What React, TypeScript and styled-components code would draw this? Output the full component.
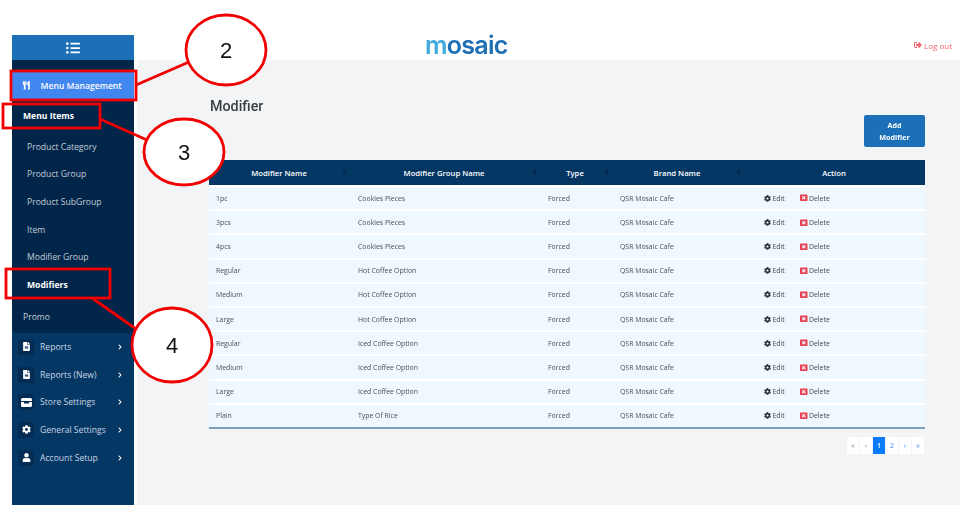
import React from 'react';
import styled, { createGlobalStyle } from 'styled-components';
import {
  FaChevronRight,
  FaCog,
  FaFileAlt,
  FaListUl,
  FaSignOutAlt,
  FaSort,
  FaUser,
  FaUtensils,
  FaWindowClose,
} from 'react-icons/fa';

const GlobalStyle = createGlobalStyle`
  html, body {
    margin: 0;
    background: #ffffff;
  }
  body {
    font-family: 'Open Sans', 'Liberation Sans', sans-serif;
  }
`;

const Page = styled.div`
  position: relative;
  width: 968px;
  height: 520px;
  padding: 35px 8px 15px 12px;
  box-sizing: border-box;
  overflow: hidden;
`;

const Shell = styled.div`
  display: flex;
  gap: 3px;
  height: 470px;
  filter: blur(0.5px);
`;

const Sidebar = styled.aside`
  width: 122px;
  flex: none;
  display: flex;
  flex-direction: column;
  background: #053765;
`;

const SidebarTop = styled.div`
  height: 25px;
  flex: none;
  display: flex;
  align-items: center;
  justify-content: center;
  background: #1b70b8;
  color: #ffffff;
  font-size: 14px;
`;

const SubMenu = styled.div`
  display: flex;
  flex-direction: column;
  height: 273px;
  flex: none;
  padding: 12px 0 0;
  box-sizing: border-box;
  background: #02264a;
  border-bottom-left-radius: 5px;
  border-bottom-right-radius: 5px;
`;

const MenuManagement = styled.div`
  display: flex;
  align-items: center;
  gap: 10px;
  height: 27px;
  padding-left: 10px;
  background: #4286f0;
  color: #ffffff;
  font-size: 8.6px;
  font-weight: 600;
  margin-bottom: 3px;
`;

const SubItem = styled.div<{ $active?: boolean; $outer?: boolean; $gap?: number }>`
  display: flex;
  align-items: center;
  flex: none;
  height: 27.7px;
  margin-top: ${(p) => p.$gap ?? 0}px;
  padding-left: ${(p) => (p.$outer ? '11px' : '15px')};
  color: ${(p) => (p.$active ? '#ffffff' : '#c3ccd8')};
  font-size: 8.6px;
  font-weight: ${(p) => (p.$active ? 700 : 400)};
`;

const SectionList = styled.div`
  display: flex;
  flex-direction: column;
`;

const Section = styled.div`
  display: flex;
  align-items: center;
  height: 27.7px;
  padding-left: 6px;
  color: #c9d5e2;
  font-size: 8.6px;
`;

const SectionIcon = styled.span`
  display: flex;
  align-items: center;
  justify-content: center;
  width: 16px;
  height: 16px;
  margin-right: 6px;
  border-radius: 2px;
  background: #032c55;
  color: #ffffff;
  font-size: 9px;
`;

const SectionLabel = styled.span`
  flex: 1;
`;

const Chevron = styled.span`
  display: flex;
  margin-right: 11px;
  color: #ffffff;
  font-size: 6px;
`;

const Main = styled.main`
  flex: 1;
  display: flex;
  flex-direction: column;
  min-width: 0;
`;

const Header = styled.header`
  height: 25px;
  flex: none;
  display: flex;
  align-items: center;
  justify-content: space-between;
  padding: 0 8px 0 288px;
  background: #ffffff;
`;

const Logo = styled.div`
  margin-top: -5px;
  font-family: 'Inter', sans-serif;
  font-size: 25px;
  font-weight: 600;
  line-height: 22px;
  letter-spacing: -0.7px;
  color: #1c6fb4;
  span {
    color: #3eaadf;
  }
`;

const LogOut = styled.div`
  display: flex;
  align-items: center;
  gap: 2px;
  margin-top: -5px;
  color: #f0646a;
  font-size: 8px;
`;

const Content = styled.div`
  flex: 1;
  display: flex;
  flex-direction: column;
  padding: 36px 35px 0 72px;
  background: #f2f4f6;
`;

const Title = styled.h1`
  margin: 0 0 0 1px;
  color: #3a3f45;
  font-family: 'Roboto', sans-serif;
  font-size: 14.3px;
  font-weight: 500;
  line-height: 20px;
`;

const Toolbar = styled.div`
  display: flex;
  justify-content: flex-end;
  margin-top: -1px;
  margin-bottom: 13px;
`;

const AddButton = styled.button`
  width: 61px;
  height: 32px;
  padding: 0 12px;
  border: 0;
  border-radius: 2px;
  background: #1b70b8;
  color: #ffffff;
  font-family: inherit;
  font-size: 7.2px;
  font-weight: 700;
  line-height: 12px;
`;

const Table = styled.table`
  width: 716px;
  border-collapse: collapse;
  table-layout: fixed;
  background: #ffffff;
`;

const HeadCell = styled.th`
  position: relative;
  height: 25px;
  padding: 0;
  background: #053765;
  border-bottom: 2px solid #ffffff;
  color: #ffffff;
  font-size: 7.7px;
  font-weight: 600;
  text-align: center;
`;

const SortMark = styled.span`
  position: absolute;
  right: 1px;
  top: 9px;
  color: #02264a;
  font-size: 7px;
`;

const Cell = styled.td`
  height: 22.2px;
  padding: 0 0 0 9px;
  background: #eff7ff;
  border-bottom: 2px solid #ffffff;
  color: #4b4f55;
  font-size: 6.9px;

  tr:last-child > & {
    border-bottom-color: #7f9fb8;
  }
`;

const FirstCell = styled(Cell)`
  padding-left: 7px;
`;

const ActionCell = styled(Cell)`
  padding-left: 21px;
`;

const Actions = styled.div`
  display: flex;
  align-items: center;
`;

const ActionLink = styled.span<{ $wide?: boolean }>`
  display: flex;
  align-items: center;
  gap: 1.5px;
  width: ${(p) => (p.$wide ? '36px' : 'auto')};
  color: #44484d;
`;

const EditIcon = styled(FaCog)`
  color: #2c3136;
  font-size: 7px;
`;

const DeleteIcon = styled(FaWindowClose)`
  color: #e8404f;
  font-size: 7.5px;
`;

const Pagination = styled.div`
  display: flex;
  justify-content: flex-end;
  gap: 1px;
  margin: 8px 1px 0 0;
`;

const PageButton = styled.div<{ $active?: boolean; $muted?: boolean }>`
  display: flex;
  align-items: center;
  justify-content: center;
  width: 12px;
  height: 17px;
  background: ${(p) => (p.$active ? '#0a7bff' : '#ffffff')};
  color: ${(p) => (p.$active ? '#ffffff' : p.$muted ? '#a4acb4' : '#6ea8f0')};
  font-size: 7px;
  font-weight: 600;
`;

const Annotations = styled.svg`
  position: absolute;
  left: 0;
  top: 0;
  width: 968px;
  height: 520px;
  pointer-events: none;
`;

const CalloutNumber = styled.text`
  font-family: 'Liberation Sans', Arial, sans-serif;
  font-size: 22px;
  fill: #111111;
  text-anchor: middle;
`;

const StoreIcon = () => (
  <svg width="11" height="9" viewBox="0 0 11 9">
    <path d="M1.5 0h8A1.5 1.5 0 0 1 11 1.5V3H0V1.5A1.5 1.5 0 0 1 1.5 0z" fill="#fff" />
    <path d="M0 4h3v1.5h5V4h3v3.5A1.5 1.5 0 0 1 9.5 9h-8A1.5 1.5 0 0 1 0 7.5z" fill="#fff" />
  </svg>
);

const subItems = ['Product Category', 'Product Group', 'Product SubGroup', 'Item', 'Modifier Group'];

const sections = [
  { label: 'Reports', icon: <FaFileAlt /> },
  { label: 'Reports (New)', icon: <FaFileAlt /> },
  { label: 'Store Settings', icon: <StoreIcon /> },
  { label: 'General Settings', icon: <FaCog /> },
  { label: 'Account Setup', icon: <FaUser /> },
];

const columns = [
  { title: 'Modifier Name', width: 140, sort: true },
  { title: 'Modifier Group Name', width: 190, sort: true },
  { title: 'Type', width: 72, sort: true },
  { title: 'Brand Name', width: 132, sort: true },
  { title: 'Action', width: 182, sort: false },
];

const rows = [
  ['1pc', 'Cookies Pieces'],
  ['3pcs', 'Cookies Pieces'],
  ['4pcs', 'Cookies Pieces'],
  ['Regular', 'Hot Coffee Option'],
  ['Medium', 'Hot Coffee Option'],
  ['Large', 'Hot Coffee Option'],
  ['Regular', 'Iced Coffee Option'],
  ['Medium', 'Iced Coffee Option'],
  ['Large', 'Iced Coffee Option'],
  ['Plain', 'Type Of Rice'],
];

const callouts = [
  { n: '2', cx: 226, cy: 50, rx: 40, ry: 35, box: [11, 71, 125, 29], line: [136, 85, 189, 62] },
  { n: '3', cx: 184, cy: 152, rx: 40, ry: 33, box: [3, 104, 97, 24], line: [100, 119, 147, 140] },
  { n: '4', cx: 172, cy: 345, rx: 40, ry: 37, box: [6, 269, 104, 29], line: [92, 298, 136, 329] },
];

const App = () => {
  return (
    <Page>
      <GlobalStyle />
      <Shell>
        <Sidebar>
          <SidebarTop>
            <FaListUl />
          </SidebarTop>
          <SubMenu>
            <MenuManagement>
              <FaUtensils />
              Menu Management
            </MenuManagement>
            <SubItem $active $outer>
              Menu Items
            </SubItem>
            {subItems.map((item, index) => (
              <SubItem key={item} $gap={index === 0 ? 3 : 0}>
                {item}
              </SubItem>
            ))}
            <SubItem $active>Modifiers</SubItem>
            <SubItem $outer $gap={4}>
              Promo
            </SubItem>
          </SubMenu>
          <SectionList>
            {sections.map((section) => (
              <Section key={section.label}>
                <SectionIcon>{section.icon}</SectionIcon>
                <SectionLabel>{section.label}</SectionLabel>
                <Chevron>
                  <FaChevronRight />
                </Chevron>
              </Section>
            ))}
          </SectionList>
        </Sidebar>
        <Main>
          <Header>
            <Logo>
              <span>m</span>osaic
            </Logo>
            <LogOut>
              <FaSignOutAlt />
              Log out
            </LogOut>
          </Header>
          <Content>
            <Title>Modifier</Title>
            <Toolbar>
              <AddButton>Add Modifier</AddButton>
            </Toolbar>
            <Table>
              <colgroup>
                {columns.map((col) => (
                  <col key={col.title} width={col.width} />
                ))}
              </colgroup>
              <thead>
                <tr>
                  {columns.map((col) => (
                    <HeadCell key={col.title}>
                      {col.title}
                      {col.sort && (
                        <SortMark>
                          <FaSort />
                        </SortMark>
                      )}
                    </HeadCell>
                  ))}
                </tr>
              </thead>
              <tbody>
                {rows.map((row, index) => (
                  <tr key={index}>
                    <FirstCell>{row[0]}</FirstCell>
                    <Cell>{row[1]}</Cell>
                    <Cell>Forced</Cell>
                    <Cell>QSR Mosaic Cafe</Cell>
                    <ActionCell>
                      <Actions>
                        <ActionLink $wide>
                          <EditIcon />
                          Edit
                        </ActionLink>
                        <ActionLink>
                          <DeleteIcon />
                          Delete
                        </ActionLink>
                      </Actions>
                    </ActionCell>
                  </tr>
                ))}
              </tbody>
            </Table>
            <Pagination>
              <PageButton $muted>«</PageButton>
              <PageButton $muted>‹</PageButton>
              <PageButton $active>1</PageButton>
              <PageButton>2</PageButton>
              <PageButton>›</PageButton>
              <PageButton>»</PageButton>
            </Pagination>
          </Content>
        </Main>
      </Shell>
      <Annotations viewBox="0 0 968 520">
        {callouts.map((c) => (
          <g key={c.n} fill="none" stroke="#f00000" strokeWidth={2.8}>
            <rect x={c.box[0]} y={c.box[1]} width={c.box[2]} height={c.box[3]} />
            <line x1={c.line[0]} y1={c.line[1]} x2={c.line[2]} y2={c.line[3]} />
            <ellipse cx={c.cx} cy={c.cy} rx={c.rx} ry={c.ry} fill="#ffffff" />
            <CalloutNumber x={c.cx} y={c.cy + 8} stroke="none">
              {c.n}
            </CalloutNumber>
          </g>
        ))}
      </Annotations>
    </Page>
  );
};

export default App;
